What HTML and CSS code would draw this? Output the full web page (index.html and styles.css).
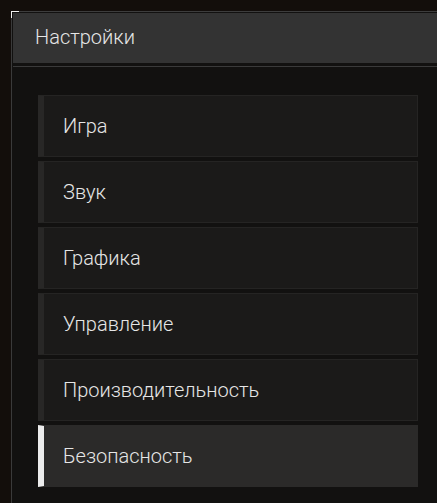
FILE: index.html
```html
<!DOCTYPE html>
<html lang="ru">
<head>
<meta charset="utf-8">
<title>Настройки</title>
<link rel="stylesheet" href="styles.css">
</head>
<body>
<div class="panel">
  <span class="corner"></span>
  <div class="header">Настройки</div>
  <div class="divider"></div>
  <ul class="menu">
    <li class="item">Игра</li>
    <li class="item">Звук</li>
    <li class="item">Графика</li>
    <li class="item">Управление</li>
    <li class="item">Производительность</li>
    <li class="item active">Безопасность</li>
  </ul>
</div>
</body>
</html>
```

FILE: styles.css
```css
html, body {
  margin: 0;
  padding: 0;
  height: 100%;
  overflow: hidden;
}
body {
  background: #130e0b;
  font-family: Roboto, "Liberation Sans", sans-serif;
  font-weight: 300;
  color: #e6e6e6;
  padding: 11px 0 0 11px;
  box-sizing: border-box;
}
.panel {
  position: relative;
  height: 100%;
  border-top: 1px solid #3d3d3d;
  border-left: 1px solid #3a3a3a;
  background: #121110;
  padding: 1px 0 0 1px;
  box-sizing: border-box;
}
.corner {
  position: absolute;
  left: -1px;
  top: -1px;
  width: 7px;
  height: 6px;
  border-top: 1px solid #f0f0f0;
  border-left: 1px solid #f0f0f0;
}
.header {
  height: 50px;
  box-sizing: border-box;
  background: #333333;
  display: flex;
  align-items: center;
  padding: 0 0 3px 22px;
  font-size: 20px;
}
.divider {
  height: 1px;
  margin-top: 3px;
  background: #3a3a3a;
}
.menu {
  list-style: none;
  margin: 28px 19px 0 25px;
  padding: 0;
  display: flex;
  flex-direction: column;
  gap: 4px;
}
.item {
  height: 62px;
  box-sizing: border-box;
  background: #1b1a19;
  border: 1px solid #252423;
  border-left: 6px solid #282726;
  display: flex;
  align-items: center;
  padding: 0 0 1px 19px;
  font-size: 20px;
}
.item.active {
  background: #2b2a29;
  border-color: #2b2a29;
  border-left-color: #ececec;
}
```
